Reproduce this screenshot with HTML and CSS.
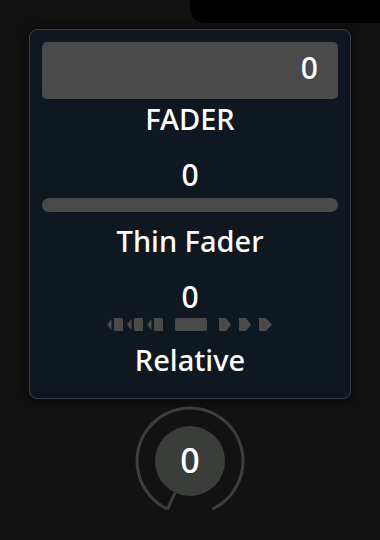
FILE: index.html
```html
<!DOCTYPE html>
<html lang="en">
<head>
    <meta charset="UTF-8">
    <meta name="viewport" content="width=device-width, initial-scale=1.0">
    <title>Controls</title>
    <link rel="stylesheet" href="styles.css">
</head>
<body>
    <div class="topbar"></div>
    <div class="panel">
        <div class="control">
            <input type="text" class="number_box" value="0">
            <div class="label first">FADER</div>
        </div>
        <div class="control">
            <div class="value">0</div>
            <div class="fader"></div>
            <div class="label">Thin Fader</div>
        </div>
        <div class="control">
            <div class="value">0</div>
            <svg class="relative" width="166" height="13" viewBox="0 0 166 13">
                <g fill="#4a4a4a">
                    <!-- step back buttons -->
                    <polygon points="0,6.5 4.5,1 4.5,12"/>
                    <rect x="7" y="0" width="9" height="13" rx="1"/>
                    <polygon points="20,6.5 24.5,1 24.5,12"/>
                    <rect x="27" y="0" width="9" height="13" rx="1"/>
                    <polygon points="40,6.5 44.5,1 44.5,12"/>
                    <rect x="47" y="0" width="9" height="13" rx="1"/>
                    <!-- center -->
                    <rect x="68" y="0" width="32" height="13" rx="2"/>
                    <!-- step forward buttons -->
                    <polygon points="112,0 119,0 124,6.5 119,13 112,13"/>
                    <polygon points="132,0 139,0 144,6.5 139,13 132,13"/>
                    <polygon points="152,0 159,0 165,6.5 159,13 152,13"/>
                </g>
            </svg>
            <div class="label">Relative</div>
        </div>
    </div>
    <div class="knob">
        <svg width="120" height="120" viewBox="0 0 120 120">
            <path d="M37.6 108 A53 53 0 1 1 82.4 108" fill="none" stroke="#3d3f3d" stroke-width="3"/>
            <circle cx="60" cy="60" r="35" fill="#3b3d3b"/>
            <line x1="45.2" y1="91.7" x2="37.6" y2="108" stroke="#3d3f3d" stroke-width="3"/>
            <text x="60" y="71.5" text-anchor="middle" class="knob_value">0</text>
        </svg>
    </div>
</body>
</html>
```

FILE: styles.css
```css
* { box-sizing: border-box; }
body { margin: 0; background: #121212; font-family: "Noto Sans", "Open Sans", sans-serif; font-weight: 500; color: #fff; width: 380px; height: 540px; overflow: hidden; }
.topbar { width: 190px; height: 23px; margin-left: auto; background: #000; border-bottom-left-radius: 14px; }
.panel { margin: 6px 29px 0; background: #0f1820; border: 1px solid #3b3d40; border-radius: 8px; padding: 12px 12px 20px; display: flex; flex-direction: column; gap: 20px; box-shadow: 0 0 14px rgba(0, 0, 0, 0.7); }
.control { display: flex; flex-direction: column; align-items: center; }
.number_box { width: 100%; height: 57px; border: none; border-radius: 5px; background: #4a4a4a; color: #fff; font-family: inherit; font-weight: 500; font-size: 30px; text-align: right; padding: 0 20px 6px; outline: none; }
.value { font-size: 30px; line-height: 36px; }
.label { font-size: 29px; line-height: 36px; margin-top: 11px; }
.label.first { margin-top: 2px; }
.fader { width: 100%; height: 14px; border-radius: 7px; background: #4a4a4a; margin-top: 5px; }
.relative { display: block; margin-top: 3px; margin-left: -1px; }
.knob { display: flex; justify-content: center; margin-top: 2px; }
.knob svg { display: block; }
.knob_value { fill: #fff; font-family: "Noto Sans", "Open Sans", sans-serif; font-weight: 500; font-size: 34px; }
```
